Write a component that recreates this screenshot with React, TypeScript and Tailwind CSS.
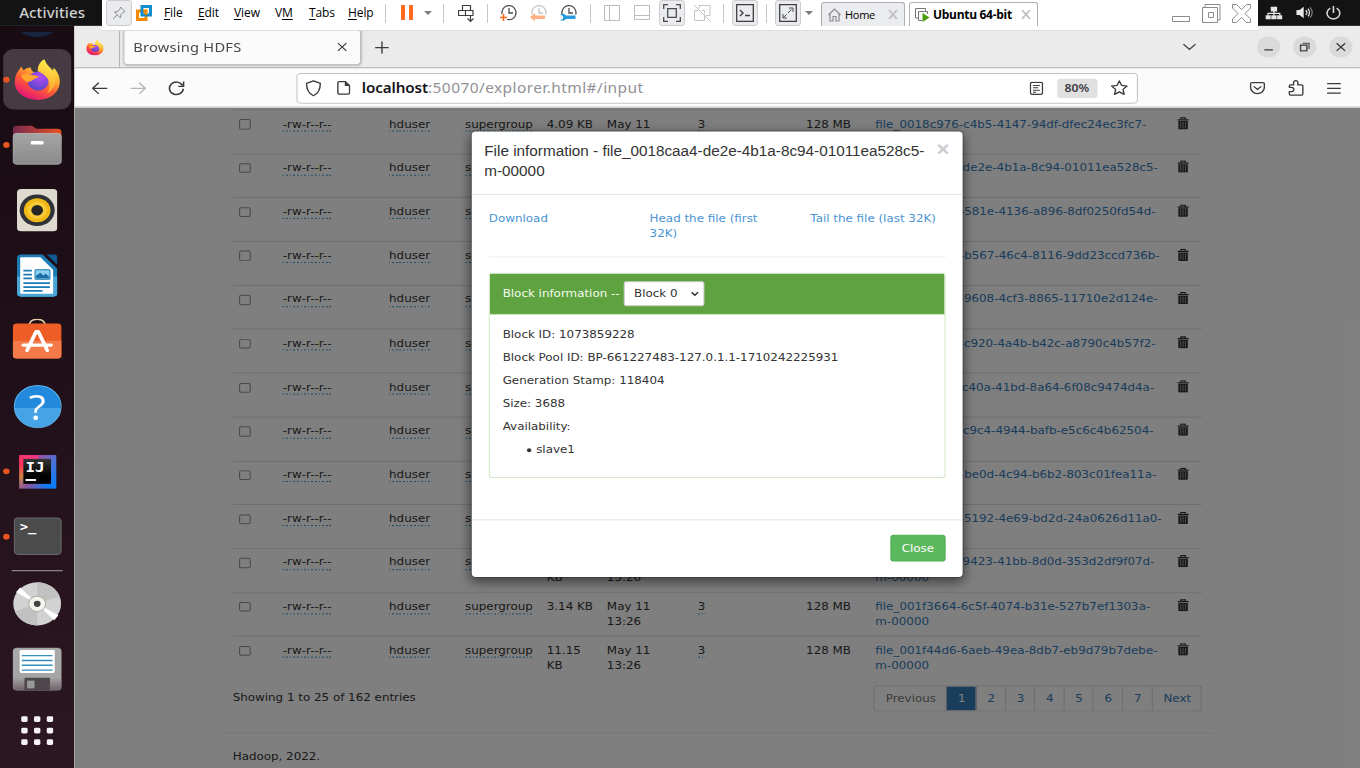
import React from "react";

type Row = { size: [string, string?]; name: string };

const rows: Row[] = [
  { size: ["4.09 KB"], name: "file_0018c976-c4b5-4147-94df-dfec24ec3fc7-" },
  { size: ["3.6 KB"], name: "file_0018caa4-de2e-4b1a-8c94-01011ea528c5-" },
  { size: ["4.21 KB"], name: "file_00192147-581e-4136-a896-8df0250fd54d-" },
  { size: ["5.02 KB"], name: "file_00193046-b567-46c4-8116-9dd23ccd736b-" },
  { size: ["2.87 KB"], name: "file_0019a512-9608-4cf3-8865-11710e2d124e-" },
  { size: ["6.11 KB"], name: "file_001a7240-c920-4a4b-b42c-a8790c4b57f2-" },
  { size: ["3.95 KB"], name: "file_001bc7ec-c40a-41bd-8a64-6f08c9474d4a-" },
  { size: ["4.48 KB"], name: "file_001c6e90-c9c4-4944-bafb-e5c6c4b62504-" },
  { size: ["3.33 KB"], name: "file_001d4381-be0d-4c94-b6b2-803c01fea11a-" },
  { size: ["7.02 KB"], name: "file_001e0756-5192-4e69-bd2d-24a0626d11a0-" },
  { size: ["10.47", "KB"], name: "file_001e8ac5-9423-41bb-8d0d-353d2df9f07d-" },
  { size: ["3.14 KB"], name: "file_001f3664-6c5f-4074-b31e-527b7ef1303a-" },
  { size: ["11.15", "KB"], name: "file_001f44d6-6aeb-49ea-8db7-eb9d79b7debe-" },
];

const pages: [string, string][] = [
  ["Previous", "w-[68px] text-[#777]"],
  ["1", "w-[28px] bg-[#337ab7] text-white"],
  ["2", "w-[27.5px] text-[#337ab7]"],
  ["3", "w-[27.5px] text-[#337ab7]"],
  ["4", "w-[27.5px] text-[#337ab7]"],
  ["5", "w-[27.5px] text-[#337ab7]"],
  ["6", "w-[27.5px] text-[#337ab7]"],
  ["7", "w-[28px] text-[#337ab7]"],
  ["Next", "w-[45.5px] text-[#337ab7]"],
];

function FirefoxLogo({ size, id }: { size: number; id: string }) {
  return (
    <svg width={size} height={size} viewBox="0 0 48 48">
      <defs>
        <linearGradient id={id + "a"} x1="0.8" y1="0.05" x2="0.3" y2="1">
          <stop offset="0" stopColor="#fff44f" />
          <stop offset="0.35" stopColor="#ffb02e" />
          <stop offset="0.62" stopColor="#ff5a36" />
          <stop offset="1" stopColor="#e3127c" />
        </linearGradient>
        <radialGradient id={id + "b"} cx="0.6" cy="0.3" r="0.8">
          <stop offset="0" stopColor="#b64cf2" />
          <stop offset="1" stopColor="#4b46c8" />
        </radialGradient>
        <linearGradient id={id + "c"} x1="0.7" y1="0" x2="0.5" y2="1">
          <stop offset="0" stopColor="#fff44f" />
          <stop offset="1" stopColor="#ff9a2a" />
        </linearGradient>
      </defs>
      <path d="M5 14c1-2 2-3 3-4 0 2 1 3 2 4 2-2 4-3 7-3 0 2 1 4 3 5h5c0-6 2-11 6-14 1 5 5 8 8 12 1-1 1-2 1-3 4 5 7 11 6 18-1 10-10 18-22 18S1 39 1 28c0-6 1-10 4-14z" fill={"url(#" + id + "a)"} />
      <circle cx="24.500" cy="26" r="10.500" fill={"url(#" + id + "b)"} />
      <path d="M24 15c0-6 2-10 6-13 1 6 6 9 9 14 5 9 3 19-6 24 4-6 4-13 0-18-2-3-6-5-9-7z" fill={"url(#" + id + "c)"} />
      <path d="M7 20c3-2 7-2 10-1 3 1 5 0 8 2-1 2-4 2-6 4-1 1-3 2-5 2-3 0-5-3-7-7z" fill="#ffa52b" />
    </svg>
  );
}

function Trash() {
  return (
    <svg width="11" height="13" viewBox="0 0 11 13">
      <path d="M3.500 2V.8h4V2M.2 2.800h10.600" fill="none" stroke="#333" strokeWidth="1.300" />
      <path d="M1 4h9v7.800q0 1-1 1H2q-1 0-1-1z" fill="#333" />
      <path d="M3.200 5v6.500M5.500 5v6.500M7.800 5v6.500" stroke="#fff" strokeOpacity=".6" strokeWidth=".8" />
    </svg>
  );
}

function Editable({ children }: { children: React.ReactNode }) {
  return (
    <span className="inline-block h-[15.400px] bg-[repeating-linear-gradient(90deg,#2a95cc_0px,#2a95cc_1.6px,transparent_1.6px,transparent_3.4px)] bg-[length:100%_1px] bg-bottom bg-no-repeat">
      {children}
    </span>
  );
}

function FileRow({ row }: { row: Row }) {
  return (
    <div className="grid h-[45.7px] grid-cols-[41px_100px_71.5px_76.9px_56.6px_85.6px_101.9px_65.2px_283.7px_29.6px] border-t border-[#ddd] pt-[6.6px] *:pl-[6.2px]">
      <div className="pt-[2.800px]">
        <div className="h-[10.4px] w-[10.4px] rounded-[2px] border border-[#8f8f9d] bg-white" />
      </div>
      <div><Editable>-rw-r--r--</Editable></div>
      <div><Editable>hduser</Editable></div>
      <div><Editable>supergroup</Editable></div>
      <div className="whitespace-nowrap">{row.size[0]}{row.size[1] && <><br />{row.size[1]}</>}</div>
      <div className="whitespace-nowrap">May 11<br />13:26</div>
      <div><Editable>3</Editable></div>
      <div className="whitespace-nowrap">128 MB</div>
      <div className="whitespace-nowrap text-[#337ab7]">{row.name}<br />m-00000</div>
      <div><Trash /></div>
    </div>
  );
}

function Explorer() {
  return (
    <div className="mx-auto w-[936px] pt-[2px]">
      <div className="px-[12px]">
        {rows.map((r) => <FileRow key={r.name} row={r} />)}
        <div className="mt-[6.500px] flex items-start justify-between">
          <div className="pt-[5px]">Showing 1 to 25 of 162 entries</div>
          <div className="flex h-[27px] overflow-hidden rounded-[3.2px] border border-[#ddd]">
            {pages.map(([label, cls]) => (
              <div key={label} className={"flex items-center justify-center border-r border-[#ddd] pt-[1px] pl-[1.500px] last:border-r-0 " + cls}>{label}</div>
            ))}
          </div>
        </div>
      </div>
      <div className="mt-[22px] border-t border-[#eee]" />
      <div className="px-[12px] pt-[17px]">Hadoop, 2022.</div>
    </div>
  );
}

function Modal() {
  return (
    <div className="mt-[24px] h-[466px] w-[464.400px] rounded-[4.8px] border border-black/20 bg-white bg-clip-padding shadow-[0_4px_12px_rgba(0,0,0,.5)]">
      <div className="flex h-[66px] justify-between border-b border-[#e5e5e5] pt-[10.500px] pr-[12.500px] pl-[12px]">
        <div className="w-[420px] font-['Liberation_Sans',sans-serif] text-[14.4px] leading-[20px] text-[#333]">
          File information - file_0018caa4-de2e-4b1a-8c94-01011ea528c5-<br />m-00000
        </div>
        <div className="-mt-[3px] font-['Liberation_Sans',sans-serif] text-[21px] leading-[22px] font-bold text-[#ccc]">×</div>
      </div>
      <div className="px-[16.300px] pt-[17px]">
        <div className="grid h-[32px] grid-cols-[151.300px_151.300px_auto] text-[#4a93d3]">
          <div>Download</div>
          <div>Head the file (first<br />32K)</div>
          <div className="whitespace-nowrap">Tail the file (last 32K)</div>
        </div>
        <div className="mt-[15px] mb-[16px] border-t border-[#eee]" />
        <div className="overflow-hidden rounded-[3.2px] border border-[#d6e9c6]">
          <div className="flex h-[42.500px] items-center border-b border-[#d6e9c6] bg-[#5fa341] pl-[12px] text-[#f3faef]">
            <span className="w-[113.700px]">Block information --</span>
            <div className="flex h-[26px] w-[76px] items-center justify-between rounded-[2.500px] border border-[#ccc] bg-white pr-[4px] pl-[9px] text-[#333]">
              <span className="pt-[1px]">Block 0</span>
              <svg width="8" height="8" viewBox="0 0 8 8"><path d="M1 2.500l3 3 3-3" fill="none" stroke="#333" strokeWidth="1.400" /></svg>
            </div>
          </div>
          <div className="flex h-[169px] flex-col gap-[8px] px-[12px] pt-[13px]">
            <div>Block ID: 1073859228</div>
            <div>Block Pool ID: BP-661227483-127.0.1.1-1710242225931</div>
            <div>Generation Stamp: 118404</div>
            <div>Size: 3688</div>
            <div>Availability:</div>
            <div className="flex items-center gap-[5px] pl-[22.500px]"><span className="h-[4px] w-[4px] rounded-full bg-[#333]" />slave1</div>
          </div>
        </div>
      </div>
      <div className="mt-[43.500px] flex justify-end border-t border-[#e5e5e5] pt-[15px] pr-[16.300px]">
        <div className="flex h-[28px] w-[52px] items-center justify-center rounded-[3.2px] border border-[#4cae4c] bg-[#5cb85c] pt-[1px] text-white">Close</div>
      </div>
    </div>
  );
}

const line = { fill: "none", stroke: "#3a3a3f", strokeWidth: 1.3 } as const;

function TabStrip() {
  return (
    <div className="flex h-[44px] items-center border-b border-[#b5b5b5] bg-[#ebebeb] pt-[2px]">
      <div className="flex h-full w-[43px] items-center justify-center border-r border-[#b5b5b5] pr-[3px]"><FirefoxLogo size={17} id="s" /></div>
      <div className="-mt-[2px] ml-[3.500px] flex h-[36px] w-[222px] items-center justify-between rounded-[4px] bg-[#fbfbfb] pr-[11.500px] pl-[9px] shadow-[0_0_3px_rgba(0,0,0,.4)]">
        <span className="pt-[2px] font-['Noto_Sans',sans-serif] text-[13.8px] tracking-[.2px] text-[#4a494e]">Browsing HDFS</span>
        <svg width="10" height="10" viewBox="0 0 10 10"><path d="M1 1l8 8M9 1l-8 8" {...line} strokeWidth={1.1} /></svg>
      </div>
      <svg className="ml-[14px]" width="13" height="13" viewBox="0 0 13 13"><path d="M6.500 0v13M0 6.500h13" {...line} /></svg>
      <svg className="-mt-[1px] ml-[747.500px]" width="13" height="8" viewBox="0 0 13 8"><path d="M.8 1l5.700 5.500L12.200 1" {...line} /></svg>
      <div className="-mt-[1.500px] ml-[56.500px] flex gap-[12px]">
        <div className="flex h-[22px] w-[22px] items-center justify-center rounded-full bg-[#dadada]"><svg width="10" height="10" viewBox="0 0 10 10"><path d="M1 8h8" {...line} /></svg></div>
        <div className="flex h-[22px] w-[22px] items-center justify-center rounded-full bg-[#dadada]"><svg width="10" height="10" viewBox="0 0 10 10"><path d="M1 3h6v6H1z" {...line} /><path d="M3 1h6v6" {...line} strokeWidth={1} /></svg></div>
        <div className="flex h-[22px] w-[22px] items-center justify-center rounded-full bg-[#dadada]"><svg width="10" height="10" viewBox="0 0 10 10"><path d="M1 1l8 8M9 1L1 9" {...line} /></svg></div>
      </div>
    </div>
  );
}

function Toolbar() {
  return (
    <div className="flex h-[41px] items-center border-b border-[#b9b9b9] bg-[#fbfbfb] pt-[1px]">
      <svg className="ml-[16px]" width="16" height="14" viewBox="0 0 16 14"><path d="M15 7H1.500M7 1.200L1.200 7 7 12.800" {...line} /></svg>
      <svg className="ml-[20px]" width="16" height="14" viewBox="0 0 16 14"><path d="M1 7h13.500M9 1.200L14.800 7 9 12.800" {...line} stroke="#b5b5b8" /></svg>
      <svg className="ml-[20px]" width="16" height="16" viewBox="0 0 16 16"><path d="M13.800 5A6.500 6.500 0 1 0 14.500 8.500M14.800 1v5h-5" {...line} strokeWidth={1.5} /></svg>
      <div className="ml-[105px] flex h-[32px] w-[791.500px] items-center rounded-[4px] border border-[#c4c4c8] bg-white">
        <svg className="ml-[7px]" width="16" height="18" viewBox="0 0 16 18"><path d="M8 1.200l6.500 2.600c0 6-1.500 10.500-6.500 13-5-2.500-6.500-7-6.500-13z" {...line} strokeLinejoin="round" /></svg>
        <svg className="ml-[14px]" width="13" height="15" viewBox="0 0 13 15"><path d="M1 2.500Q1 1 2.500 1H8l4 4v7.500q0 1.500-1.500 1.500h-8Q1 14 1 12.500z" {...line} /><path d="M7.500 1v4.500H12L8 1z" fill="#3a3a3f" /></svg>
        <span className="ml-[10.500px] w-[628px] font-['Noto_Sans',sans-serif] text-[14.600px] tracking-[.38px] text-[#919196]"><span className="text-[14.300px] font-semibold tracking-[-.1px] text-[#15141a]">localhost</span>:50070/explorer.html#/input</span>
        <svg width="13" height="14" viewBox="0 0 13 14"><rect x=".8" y=".8" width="11.400" height="12.400" rx="1.500" {...line} /><path d="M3.200 4h6.500M3.200 6.500h5M3.200 9h6.500M3.200 11h3" {...line} strokeWidth={1.1} /></svg>
        <div className="ml-[13px] flex h-[20px] w-[38px] items-center justify-center rounded-[3px] bg-[#e0e0e1] font-['Noto_Sans',sans-serif] text-[11.500px] font-semibold text-[#3b3a43]">80%</div>
        <svg className="ml-[12px]" width="17" height="17" viewBox="0 0 17 17"><path d="M8.500 1.300l2.200 4.700 5.100.6-3.800 3.500 1 5.200-4.500-2.600L4 15.300l1-5.200L1.200 6.600 6.300 6z" {...line} strokeLinejoin="round" /></svg>
      </div>
      <svg className="ml-[105.500px]" width="15" height="14" viewBox="0 0 15 14"><path d="M2.500 1h10q1.500 0 1.500 1.500V6a6.500 6.500 0 0 1-13 0V2.500Q1 1 2.500 1zM4.300 5.200l3.200 3 3.200-3" {...line} strokeLinecap="round" /></svg>
      <svg className="ml-[21px]" width="16" height="17" viewBox="0 0 16 17"><path d="M1.500 8V6.500q0-1 1-1h3V3a2 2 0 0 1 4 0v2.500h3.500q1.200 0 1.200 1.200v8q0 1.300-1.200 1.300H2.500q-1 0-1-1v-2.500h2a2 2 0 0 0 0-4.500z" {...line} strokeLinejoin="round" /></svg>
      <svg className="ml-[21px]" width="13" height="12" viewBox="0 0 13 12"><path d="M0 1h13M0 6h13M0 11h13" {...line} /></svg>
    </div>
  );
}

function DockSlot({ children, running, active }: { children: React.ReactNode; running?: boolean; active?: boolean }) {
  return (
    <div className="relative flex h-[68px] w-[70px] shrink-0 items-center justify-center">
      {active && <div className="absolute inset-x-[3px] top-[2px] bottom-[3px] rounded-[10px] bg-[#463b42]" />}
      {running && <span className="absolute top-[31px] left-[3px] h-[6px] w-[6px] rounded-full bg-[#e95420]" />}
      <div className="relative">{children}</div>
    </div>
  );
}

function Dock() {
  return (
    <div className="flex w-[70px] shrink-0 flex-col items-center bg-[linear-gradient(170deg,#180b12,#1f0f18_40%,#2c1722)]">
      <svg className="mt-[4px] shrink-0" width="32" height="18" viewBox="0 0 32 18"><path d="M0 2h32Q25 7.500 16 7.500T0 2z" fill="#16243f" /></svg>
      <DockSlot running active><div className="-mt-[2px]"><FirefoxLogo size={45} id="b" /></div></DockSlot>
      <DockSlot running>
        <svg width="46" height="42" viewBox="0 0 46 42">
          <defs><linearGradient id="fo"><stop stopColor="#77284f" /><stop offset="1" stopColor="#e95420" /></linearGradient><linearGradient id="fg" x2="0" y2="1"><stop stopColor="#a5a5a5" /><stop offset="1" stopColor="#8a8a8a" /></linearGradient></defs>
          <path d="M0 14V5q0-4 4-4h14l4 3h20q4 0 4 4v10H0z" fill="url(#fo)" />
          <rect y="9" width="46" height="32" rx="4" fill="url(#fg)" stroke="#b8b8b8" strokeWidth=".8" />
          <rect x="17" y="17" width="12" height="3.500" rx="1" fill="#fff" />
        </svg>
      </DockSlot>
      <DockSlot>
        <svg width="38" height="46" viewBox="0 0 38 46"><rect y="1" width="38" height="44" rx="4" fill="#dfdad0" /><ellipse cx="19" cy="23" rx="16.500" ry="16.500" fill="#30323a" /><circle cx="19" cy="23" r="12.500" fill="#f0b915" /><circle cx="19" cy="23" r="9" fill="#f9cb36" /><circle cx="19" cy="23" r="5.500" fill="#262626" /></svg>
      </DockSlot>
      <DockSlot>
        <svg width="38" height="46" viewBox="0 0 38 46">
          <path d="M4 1h20l14 15v25q0 4-4 4H4q-4 0-4-4V5q0-4 4-4z" fill="#1a7bb5" /><path d="M0 24h38v17q0 4-4 4H4q-4 0-4-4z" fill="#48a5d5" />
          <path d="M4 4h18l12 13v24q0 1-1 1H4q-1 0-1-1V5q0-1 1-1z" fill="#fff" /><path d="M28 1h7q3 0 3 3v8z" fill="#0d5b91" />
          <path d="M6 18h8M6 22h8M6 26h8M6 31h25M6 35h25M6 39h18" stroke="#1a7bb5" strokeWidth="1.800" /><rect x="17" y="17" width="14" height="10" rx="1" fill="#8fd0f0" stroke="#1a7bb5" /><path d="M18 26v-3l4-3 3 3 2-2 3 3v2z" fill="#1a6da5" />
        </svg>
      </DockSlot>
      <DockSlot>
        <svg width="46" height="46" viewBox="0 0 46 46">
          <path d="M15.500 8q0-7.500 7.500-7.500T30.500 8" fill="none" stroke="#e8cfa8" strokeWidth="1.600" />
          <rect y="5" width="46" height="36.500" rx="4" fill="#ee5d25" /><path d="M0 23h46v14.500q0 4-4 4H4q-4 0-4-4z" fill="#f47a49" />
          <path d="M13.500 33L22 13.500h2L32.500 33M10 27.500h26" fill="none" stroke="#fff" strokeWidth="3.600" strokeLinejoin="round" strokeLinecap="round" />
        </svg>
      </DockSlot>
      <DockSlot>
        <div className="flex h-[45px] w-[45px] items-center justify-center rounded-full border border-[#5db4ee] bg-[linear-gradient(#2389dc_54%,#45a3e6_54%)] font-['Open_Sans',sans-serif] text-[37px] leading-none text-white">?</div>
      </DockSlot>
      <DockSlot running>
        <div className="flex h-[35px] w-[35px] items-center justify-center bg-[conic-gradient(#a94a98,#4a72d8_15%,#087cfa_40%,#8a55a0_60%,#c98440_70%,#fe315d_82%,#f0398b)]">
          <div className="flex h-[26px] w-[26px] flex-col justify-between bg-gradient-to-b from-[#353535] to-black pt-[2px] pb-[3px] pl-[2px] font-['DejaVu_Sans_Mono','Liberation_Mono',monospace] text-[15px] leading-[15px] font-bold text-white">IJ<span className="h-[2px] w-[10px] bg-white" /></div>
        </div>
      </DockSlot>
      <DockSlot running>
        <div className="-mt-[1px] h-[39px] w-[45px] rounded-[4px] border border-[#686868] bg-[#4b4b4b] pt-[1px] pl-[5px] font-['DejaVu_Sans_Mono','Liberation_Mono',monospace] text-[13px] leading-[15px] font-bold text-white">&gt;_</div>
      </DockSlot>
      <div className="mt-[.5px] h-[1.500px] w-[48px] shrink-0 bg-[#a9a3a6]" />
      <DockSlot>
        <svg width="46" height="46" viewBox="0 0 46 46"><circle cx="23" cy="23" r="22.500" fill="#d2d2d2" /><path d="M23 23L23 .5A22.500 22.500 0 0 1 44 15zM23 23v22.500A22.500 22.500 0 0 1 2 31z" fill="#c1c1c1" /><path d="M23 23L3 11l4-5zM23 23l20 12-4 5z" fill="#fff" /><circle cx="23" cy="23" r="8" fill="#f4f4f0" stroke="#b5b09f" /><circle cx="23" cy="23" r="3.200" fill="#444" /></svg>
      </DockSlot>
      <DockSlot>
        <svg width="46" height="46" viewBox="0 0 46 46"><defs><linearGradient id="fl" x2="0" y2="1"><stop stopColor="#aaa" /><stop offset=".7" stopColor="#a5a5a5" /><stop offset="1" stopColor="#6e6068" /></linearGradient></defs><rect y="1" width="46" height="44" rx="4" fill="url(#fl)" stroke="#999" strokeWidth=".5" /><rect x="6.500" y="3" width="33" height="24" rx="1.500" fill="#fff" /><path d="M8.500 9h29M8.500 14h29M8.500 19h29M8.500 24h29" stroke="#3390bd" strokeWidth="1.400" /><path d="M11 33q0-1 1-1h23v13H11z" fill="#4e484c" /><rect x="13.500" y="35" width="7" height="8" fill="#999" /></svg>
      </DockSlot>
      <div className="mt-[14.500px] grid grid-cols-3 gap-[5.500px]">
        {[0, 1, 2, 3, 4, 5, 6, 7, 8].map((n) => <span key={n} className="h-[6.500px] w-[6.500px] rounded-[1.500px] bg-[#f4f2f3]" />)}
      </div>
    </div>
  );
}

function Guest() {
  return (
    <div className="flex h-[800px] w-[1280px] origin-top-left scale-x-[1.0625] scale-y-[.96] flex-col">
      <div className="flex h-[27px] shrink-0 items-center justify-between bg-[#131313] pr-[18px] pl-[18px]">
        <span className="pt-[1px] font-['Noto_Sans',sans-serif] text-[14.200px] font-medium tracking-[.1px] text-[#d0d0d0]">Activities</span>
        <div className="-mt-[1px] flex items-center gap-[12.500px]">
          <svg width="16" height="15" viewBox="0 0 16 15"><path d="M5 1h6v5H5zM0 10h5v4H0zM5.500 10h5v4h-5zM11 10h5v4h-5z" fill="#e6e6e6" /><path d="M8 5v5M2.500 10V8h11v2" fill="none" stroke="#e6e6e6" strokeWidth="1.200" /></svg>
          <svg width="16" height="14" viewBox="0 0 16 14"><path d="M0 4.500h3L7 1v12L3 9.500H0z" fill="#e6e6e6" /><path d="M9 4.500q2 2.500 0 5M11 3q3 4 0 8" fill="none" stroke="#e6e6e6" strokeWidth="1.200" /><path d="M13 1.500q4 5.500 0 11" fill="none" stroke="#888" strokeWidth="1.100" /></svg>
          <svg width="14" height="15" viewBox="0 0 14 15"><path d="M4 2.500a6 6 0 1 0 6 0M7 0v7.500" fill="none" stroke="#d8d8d8" strokeWidth="1.500" /></svg>
        </div>
      </div>
      <div className="flex min-h-0 flex-1">
        <Dock />
        <div className="flex min-w-0 flex-1 flex-col">
          <TabStrip />
          <Toolbar />
          <div className="relative min-h-0 flex-1 overflow-hidden bg-white font-['DejaVu_Sans',sans-serif] text-[11.2px] leading-[16px] text-[#333]">
            <Explorer />
            <div className="absolute inset-0 flex items-start justify-center bg-black/50"><Modal /></div>
          </div>
        </div>
      </div>
    </div>
  );
}

function Sep({ className }: { className: string }) {
  return <div className={"mt-[4px] h-[19px] w-px shrink-0 bg-[#c6c6c6] " + className} />;
}

const boxed = "flex h-[26px] w-[26px] shrink-0 items-center justify-center rounded-[3px] border border-[#cdcdcd] bg-[#e9ebee]";
const clockFace = "M9 1.700a7 7 0 1 1-.1 0zM9 4v5h4";

function HostBar() {
  const menu: [string, string, string, string][] = [
    ["", "F", "ile", "w-[34px]"], ["", "E", "dit", "w-[36px]"], ["", "V", "iew", "w-[41px]"],
    ["V", "M", "", "w-[34px]"], ["", "T", "abs", "w-[39px]"], ["", "H", "elp", "w-[38px]"],
  ];
  return (
    <div className="absolute top-0 left-[102px] flex h-[31px] w-[1156px] items-start border-b border-[#dcdcdc] bg-white font-['Open_Sans',sans-serif] text-[12px] text-black">
      <div className={boxed + " ml-[4px]"}><svg width="14" height="14" viewBox="0 0 14 14"><path d="M8.500 1l4.500 4.500-1.500.5-2.500 2.500-.5 3.500-6-6L6 5.500 8 3zM5 9l-4 4" fill="none" stroke="#8e8e8e" /></svg></div>
      <svg className="mt-[5px] ml-[4px] shrink-0" width="16" height="16" viewBox="0 0 16 16"><path d="M1.500 6h8.500v8.500H1.500z" fill="none" stroke="#f38b00" strokeWidth="3" /><path d="M6 1.500h8.500V10H6z" fill="none" stroke="#0e8fcb" strokeWidth="3" /><path d="M7.500 6H10v4" fill="none" stroke="#f38b00" strokeWidth="2.400" /></svg>
      <div className="ml-[12px] flex shrink-0 pt-[4px] leading-[18px]">
        {menu.map(([a, u, b, w]) => <span key={u} className={w + " tracking-[-.1px]"}>{a}<span className="underline underline-offset-[2px]">{u}</span>{b}</span>)}
      </div>
      <Sep className="-ml-[1px]" />
      <svg className="mt-[5px] ml-[15px] shrink-0" width="31" height="15" viewBox="0 0 31 15"><path d="M0 0h4v15H0zM8 0h4v15H8z" fill="#ff6a1f" /><path d="M23 6h8l-4 4z" fill="#7a7a7a" /></svg>
      <Sep className="ml-[11px]" />
      <svg className="mt-[5px] ml-[14px] shrink-0" width="17" height="18" viewBox="0 0 17 18"><path d="M4.500 .5h8v5h-8zM.5 5.500h7v5h-7zM7.500 5.500h7.500v5H7.500zM12.500 10v6M9.500 13.500l3 3 3-3" fill="none" stroke="#3f3f3f" strokeWidth="1.200" /></svg>
      <Sep className="ml-[12px]" />
      <svg className="mt-[4px] ml-[12px] shrink-0" width="17" height="18" viewBox="0 0 17 18"><path d={clockFace} fill="none" stroke="#4c4c4c" strokeWidth="1.300" /><path d="M0 10h7v7H0z" fill="#fff" /><path d="M3.500 10v7M0 13.500h7" stroke="#ff6a1f" strokeWidth="1.600" /></svg>
      <svg className="mt-[4px] ml-[13px] shrink-0" width="17" height="18" viewBox="0 0 17 18"><path d={clockFace} fill="none" stroke="#c4c4c4" strokeWidth="1.300" /><path d="M0 10.500h17V18H0z" fill="#fff" /><path d="M0 13.200l5-4.200v2.500h10v3.500H5v2.500z" fill="#ffb185" /></svg>
      <svg className="mt-[4px] ml-[13px] shrink-0" width="17" height="18" viewBox="0 0 17 18"><path d={clockFace} fill="none" stroke="#4c4c4c" strokeWidth="1.300" /><path d="M0 10.500h17V18H0z" fill="#fff" /><path d="M0 10.500q4-2 6 1h9.500v3.500H6q-2 3-6 1l3-1v-3z" fill="#2a99dd" /></svg>
      <Sep className="ml-[13px]" />
      <svg className="mt-[5px] ml-[13px] shrink-0" width="17" height="16" viewBox="0 0 17 16"><path d="M.5.500h15v15H.5zM5.500.500v15" fill="none" stroke="#bcbcbc" /></svg>
      <svg className="mt-[5px] ml-[13px] shrink-0" width="17" height="16" viewBox="0 0 17 16"><path d="M.5.500h15v14H.5zM.500 10.500h15" fill="none" stroke="#bcbcbc" /></svg>
      <div className={boxed + " ml-[8px]"}><svg width="18" height="18" viewBox="0 0 18 18"><path d="M.7 5V.7H5M13 .7h4.300V5M17.300 13v4.300H13M5 17.300H.7V13M4.700 4.700h8.600v8.600H4.700z" fill="none" stroke="#4c4c4c" strokeWidth="1.300" /></svg></div>
      <svg className="mt-[5px] ml-[9px] shrink-0" width="17" height="17" viewBox="0 0 17 17"><path d="M5 .5h11v10h-4M5 .5v3M.500 5.500v10h10V9M.500 5.500H4M8 5.500h2.500V8M0 0l17 17" fill="none" stroke="#c4c4c4" /></svg>
      <Sep className="ml-[12px]" />
      <div className={boxed + " ml-[8px]"}><svg width="18" height="18" viewBox="0 0 18 18"><path d="M.7.700h16.600v16.600H.7z" fill="#e9ebee" stroke="#3f3f3f" strokeWidth="1.300" /><path d="M4 6l3 3-3 3M9 11.500h5" fill="none" stroke="#3f3f3f" strokeWidth="1.400" /></svg></div>
      <Sep className="ml-[8px]" />
      <div className={boxed + " ml-[8px]"}><svg width="18" height="18" viewBox="0 0 18 18"><path d="M.7.700h16.600v16.600H.7z" fill="none" stroke="#3f3f3f" strokeWidth="1.300" /><path d="M10 4h4v4M8 14H4v-4" fill="none" stroke="#4c4c4c" /><path d="M4 14L14 4" stroke="#4c4c4c" strokeDasharray="5 2" /></svg></div>
      <svg className="mt-[11px] ml-[4px] shrink-0" width="8" height="4" viewBox="0 0 8 4"><path d="M0 0h8L4 4z" fill="#7a7a7a" /></svg>
      <div className="mt-[2px] ml-[8px] flex h-[24px] w-[84px] shrink-0 items-center rounded-t-[3px] border border-b-0 border-[#b0b0b0] bg-[#eaecef] pl-[6px] text-[11px]">
        <svg width="13" height="14" viewBox="0 0 13 14"><path d="M.5 7l6-6 6 6M2 6v7h3V8.500h3V13h3V6" fill="none" stroke="#8e8e8e" strokeWidth="1.200" /></svg>
        <span className="ml-[4px] w-[43px] pt-[1px] tracking-[-.3px]">Home</span>
        <svg width="10" height="9" viewBox="0 0 10 9"><path d="M1 0l8 9M9 0L1 9" stroke="#bfbfbf" strokeWidth="1.800" /></svg>
      </div>
      <div className="mt-[2px] ml-[4px] flex h-[24px] w-[129px] shrink-0 items-center rounded-t-[3px] border border-b-0 border-[#b0b0b0] bg-white pl-[5px] text-[12px] font-bold">
        <svg width="15" height="14" viewBox="0 0 15 14"><path d="M3 10H.5V.500h10V3" fill="none" stroke="#777" /><path d="M7 12.500H3.500V3.500h9V6" fill="none" stroke="#777" /><path d="M7.500 5v9l7-4.500z" fill="#4a9c12" /></svg>
        <span className="ml-[3px] w-[88px] pt-[1px] tracking-[-.3px] whitespace-nowrap">Ubuntu 64-bit</span>
        <svg width="10" height="9" viewBox="0 0 10 9"><path d="M1 0l8 9M9 0L1 9" stroke="#bfbfbf" strokeWidth="1.800" /></svg>
      </div>
      <svg className="mt-[3px] ml-[134px] shrink-0" width="80" height="21" viewBox="0 0 80 21" fill="none" stroke="#8b8b8b"><path d="M.5 13.500h17v5H.5z" /><path d="M30.500 4.500h15v15h-15zM33 4V1.500h15V17H46M36.500 9.500h5v5h-5z" /><path d="M60.500 1.500h4l5 5 5-5h4v3.500l-5.500 5.500 5.500 5.500v3.500h-4l-5-5-5 5h-4V16l5.500-5.500L60.500 5z" /></svg>
    </div>
  );
}

export default function App() {
  return (
    <div className="relative h-[768px] w-[1360px] overflow-hidden bg-white">
      <Guest />
      <HostBar />
    </div>
  );
}
